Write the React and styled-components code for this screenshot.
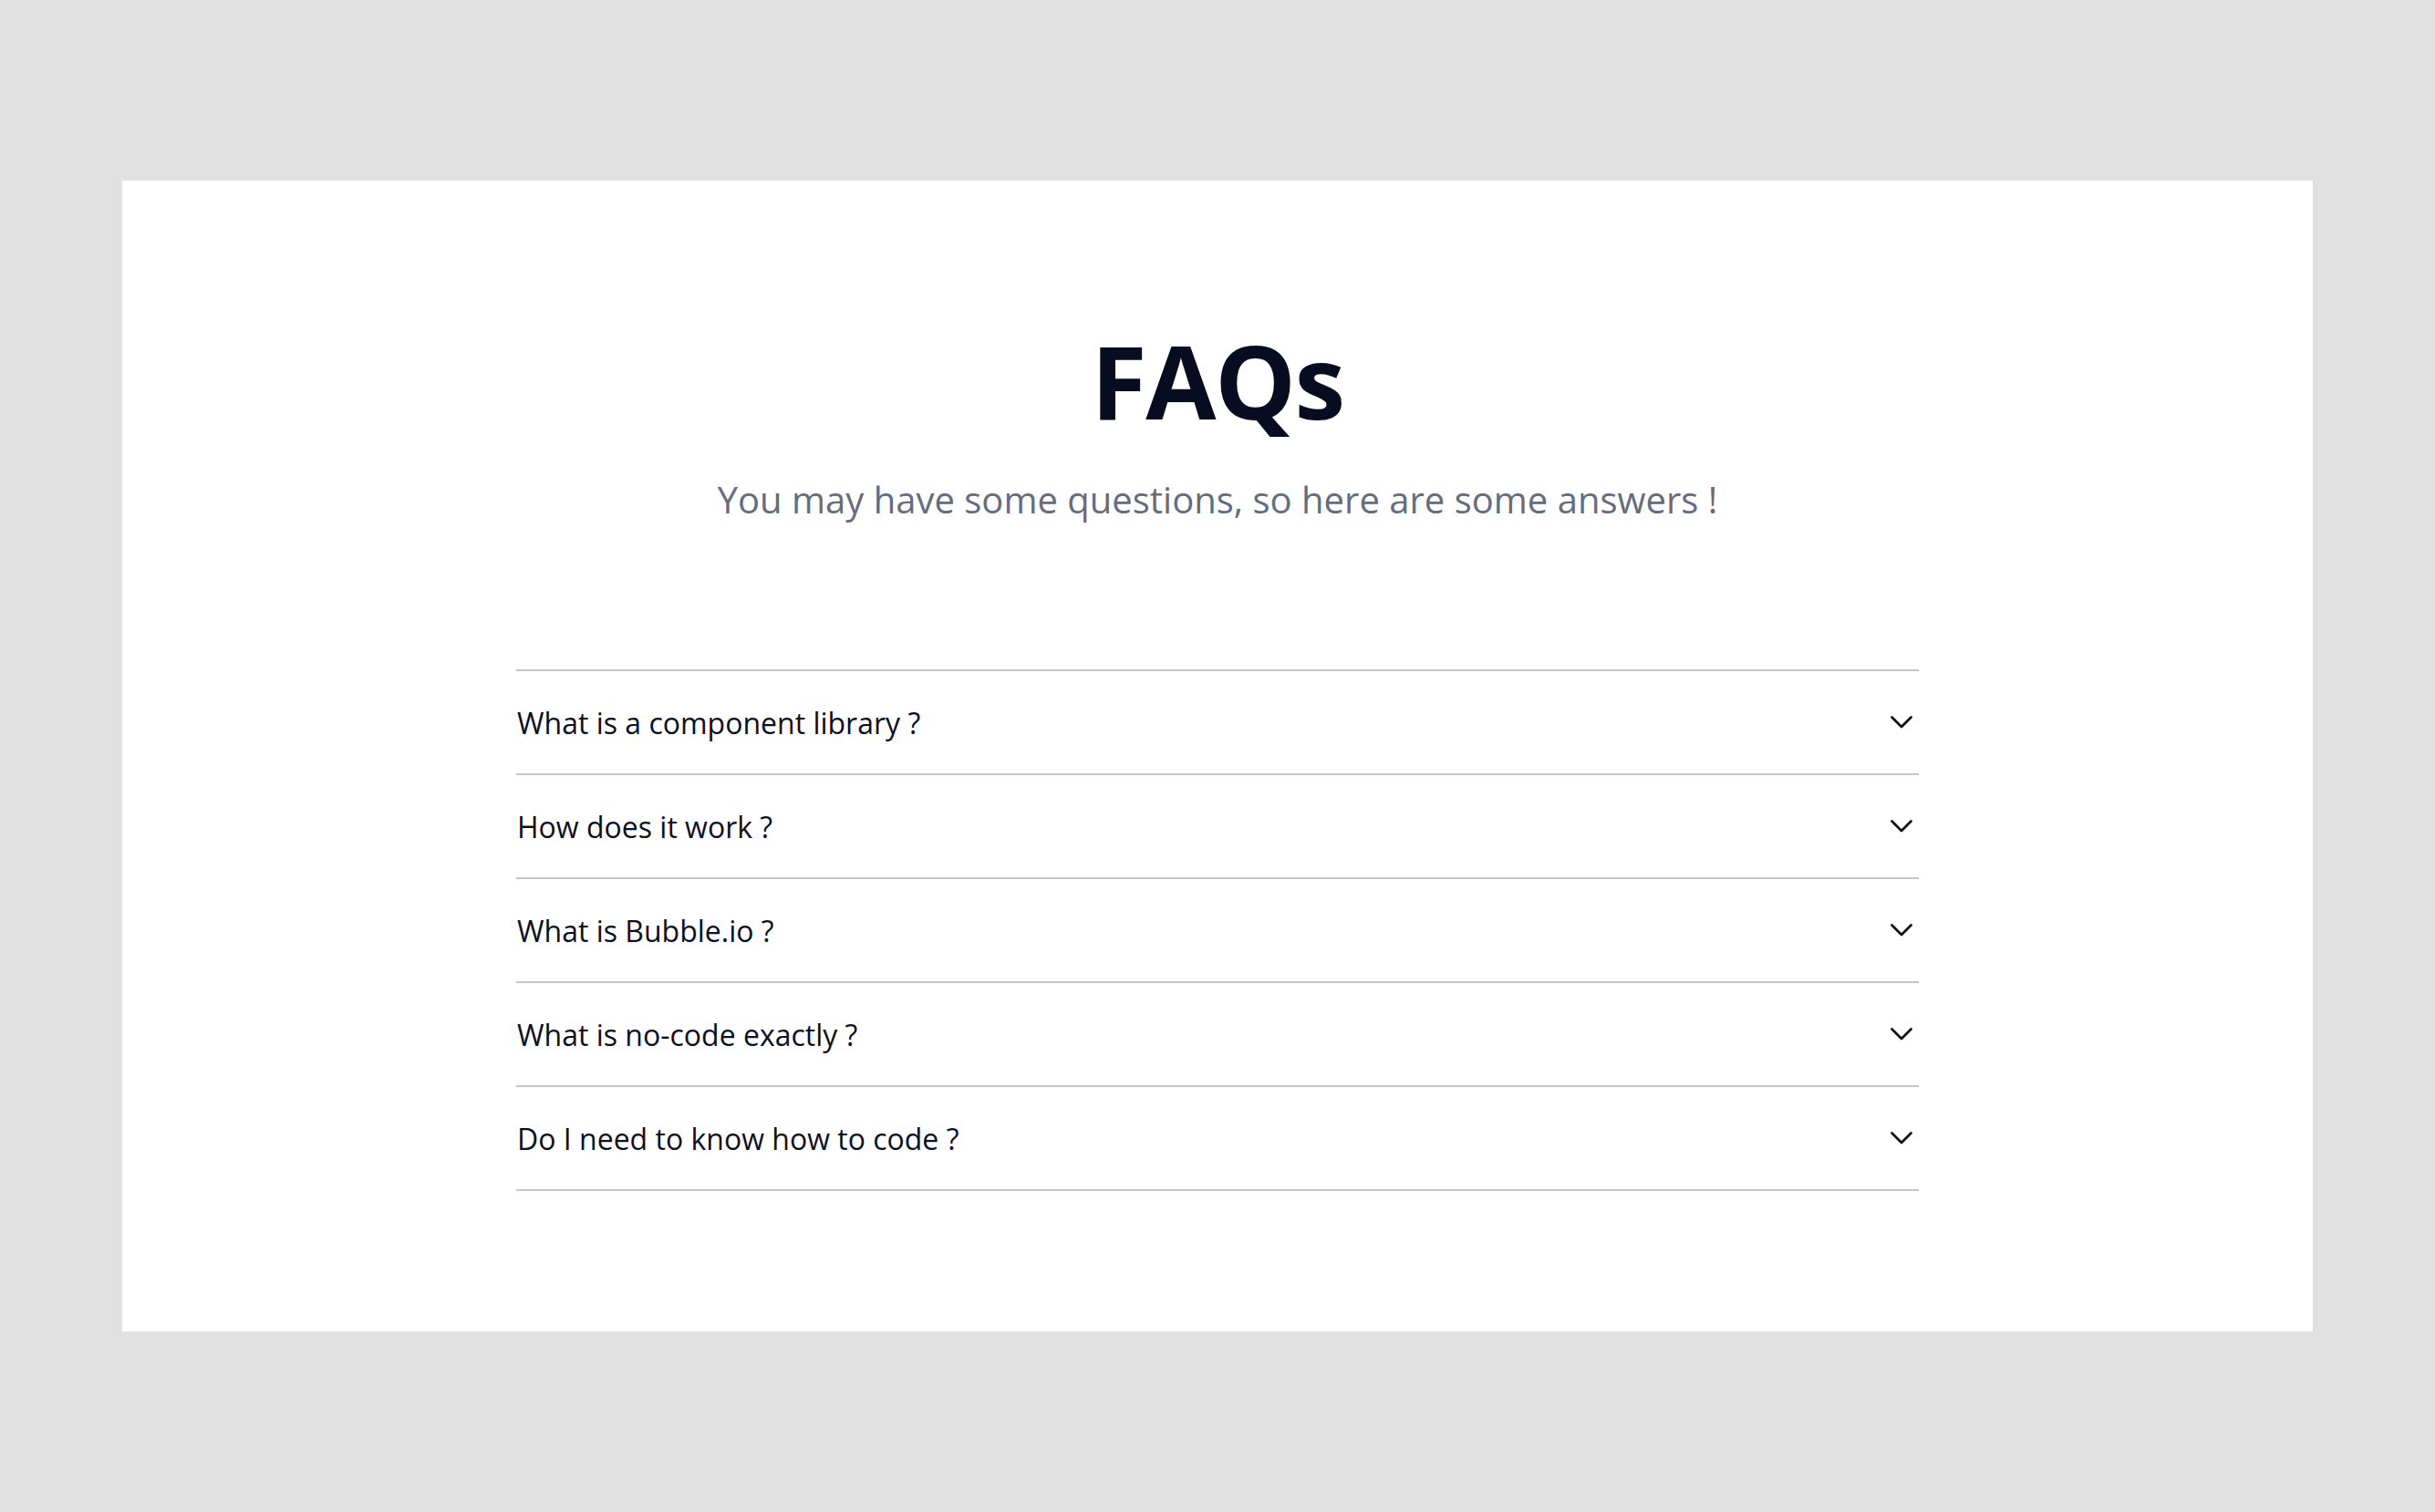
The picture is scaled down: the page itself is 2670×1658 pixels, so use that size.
import React from "react";
import styled, { createGlobalStyle } from "styled-components";

const GlobalStyle = createGlobalStyle`
  html, body {
    margin: 0;
    padding: 0;
  }
  body {
    background: #e1e1e1;
    font-family: "Open Sans", "Noto Sans", sans-serif;
  }
`;

// Page + card

const Page = styled.div`
  min-height: 100vh;
  box-sizing: border-box;
  padding: 198px 134px;
  display: flex;
`;

const Card = styled.section`
  flex: 1;
  background: #fff;
  display: flex;
  flex-direction: column;
  align-items: center;
  padding-top: 152px;
`;

const Title = styled.h1`
  margin: 0;
  font-size: 112px;
  line-height: 1.2;
  font-weight: 700;
  color: #080c20;
  letter-spacing: -1.5px;
`;

const Subtitle = styled.p`
  margin: 36px 0 0;
  font-size: 40px;
  line-height: 1.4;
  color: #666c80;
`;

const List = styled.ul`
  list-style: none;
  width: 1538px;
  margin: 158px 0 0;
  padding: 0;
  border-top: 2px solid #c3c5ce;
`;

const Item = styled.li`
  height: 112px;
  border-bottom: 2px solid #c3c5ce;
`;

const Question = styled.button`
  width: 100%;
  height: 100%;
  display: flex;
  align-items: center;
  justify-content: space-between;
  padding: 0 6px 0 1px;
  border: none;
  background: none;
  cursor: pointer;
  font-family: inherit;
  font-size: 32px;
  color: #0b0f24;
  text-align: left;
`;

const Chevron = () => (
  <svg width="26" height="16" viewBox="0 0 26 16" fill="none">
    <polyline
      points="2.5,2.5 13,13 23.5,2.5"
      stroke="#0b0f24"
      strokeWidth="2.8"
      strokeLinecap="round"
      strokeLinejoin="round"
    />
  </svg>
);

const questions = [
  "What is a component library ?",
  "How does it work ?",
  "What is Bubble.io ?",
  "What is no-code exactly ?",
  "Do I need to know how to code ?",
];

const App = () => {
  return (
    <>
      <GlobalStyle />
      <Page>
        <Card>
          <Title>FAQs</Title>
          <Subtitle>You may have some questions, so here are some answers !</Subtitle>
          <List>
            {questions.map((q) => (
              <Item key={q}>
                <Question>
                  <span>{q}</span>
                  <Chevron />
                </Question>
              </Item>
            ))}
          </List>
        </Card>
      </Page>
    </>
  );
};

export default App;
